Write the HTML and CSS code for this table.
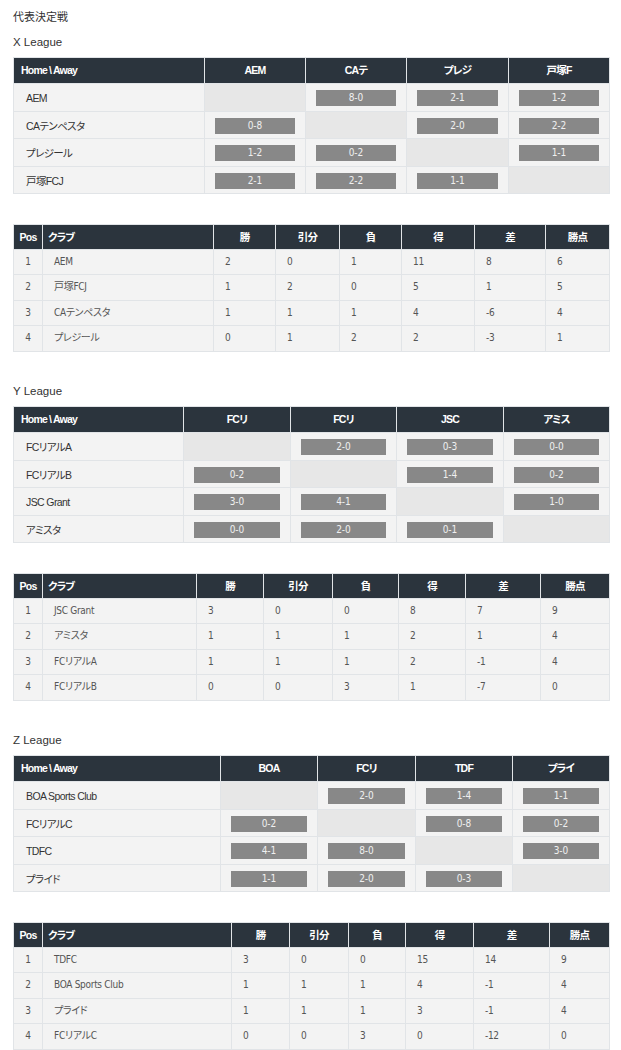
FILE: index.html
```html
<!DOCTYPE html>
<html lang="ja">
<head>
<meta charset="utf-8">
<title>代表決定戦</title>
<link rel="stylesheet" href="styles.css">
</head>
<body>
<div class="page">
  <p class="title">代表決定戦</p>

  <section class="league">
    <p class="league-name">X League</p>
    <table class="matrix">
      <colgroup><col class="w191"><col class="w101"><col class="w101"><col class="w102"><col class="w101"></colgroup>
      <thead><tr><th class="th-home">Home \ Away</th><th>AEM</th><th>CAテ</th><th>プレジ</th><th>戸塚F</th></tr></thead>
      <tbody>
        <tr><td class="team">AEM</td><td class="self"></td><td><span class="score">8-0</span></td><td><span class="score">2-1</span></td><td><span class="score">1-2</span></td></tr>
        <tr><td class="team">CAテンペスタ</td><td><span class="score">0-8</span></td><td class="self"></td><td><span class="score">2-0</span></td><td><span class="score">2-2</span></td></tr>
        <tr><td class="team">プレジール</td><td><span class="score">1-2</span></td><td><span class="score">0-2</span></td><td class="self"></td><td><span class="score">1-1</span></td></tr>
        <tr><td class="team">戸塚FCJ</td><td><span class="score">2-1</span></td><td><span class="score">2-2</span></td><td><span class="score">1-1</span></td><td class="self"></td></tr>
      </tbody>
    </table>

    <table class="standings">
      <colgroup><col class="w29"><col class="w171"><col class="w62"><col class="w64"><col class="w62"><col class="w73"><col class="w71"><col class="w64"></colgroup>
      <thead><tr><th>Pos</th><th class="th-club">クラブ</th><th>勝</th><th>引分</th><th>負</th><th>得</th><th>差</th><th>勝点</th></tr></thead>
      <tbody>
        <tr><td class="pos">1</td><td>AEM</td><td>2</td><td>0</td><td>1</td><td>11</td><td>8</td><td>6</td></tr>
        <tr><td class="pos">2</td><td>戸塚FCJ</td><td>1</td><td>2</td><td>0</td><td>5</td><td>1</td><td>5</td></tr>
        <tr><td class="pos">3</td><td>CAテンペスタ</td><td>1</td><td>1</td><td>1</td><td>4</td><td>-6</td><td>4</td></tr>
        <tr><td class="pos">4</td><td>プレジール</td><td>0</td><td>1</td><td>2</td><td>2</td><td>-3</td><td>1</td></tr>
      </tbody>
    </table>
  </section>

  <section class="league">
    <p class="league-name">Y League</p>
    <table class="matrix">
      <colgroup><col class="w170"><col class="w107"><col class="w106"><col class="w107"><col class="w106"></colgroup>
      <thead><tr><th class="th-home">Home \ Away</th><th>FCリ</th><th>FCリ</th><th>JSC</th><th>アミス</th></tr></thead>
      <tbody>
        <tr><td class="team">FCリアルA</td><td class="self"></td><td><span class="score">2-0</span></td><td><span class="score">0-3</span></td><td><span class="score">0-0</span></td></tr>
        <tr><td class="team">FCリアルB</td><td><span class="score">0-2</span></td><td class="self"></td><td><span class="score">1-4</span></td><td><span class="score">0-2</span></td></tr>
        <tr><td class="team">JSC Grant</td><td><span class="score">3-0</span></td><td><span class="score">4-1</span></td><td class="self"></td><td><span class="score">1-0</span></td></tr>
        <tr><td class="team">アミスタ</td><td><span class="score">0-0</span></td><td><span class="score">2-0</span></td><td><span class="score">0-1</span></td><td class="self"></td></tr>
      </tbody>
    </table>

    <table class="standings">
      <colgroup><col class="w29"><col class="w154"><col class="w67"><col class="w69"><col class="w66"><col class="w67"><col class="w75"><col class="w69"></colgroup>
      <thead><tr><th>Pos</th><th class="th-club">クラブ</th><th>勝</th><th>引分</th><th>負</th><th>得</th><th>差</th><th>勝点</th></tr></thead>
      <tbody>
        <tr><td class="pos">1</td><td>JSC Grant</td><td>3</td><td>0</td><td>0</td><td>8</td><td>7</td><td>9</td></tr>
        <tr><td class="pos">2</td><td>アミスタ</td><td>1</td><td>1</td><td>1</td><td>2</td><td>1</td><td>4</td></tr>
        <tr><td class="pos">3</td><td>FCリアルA</td><td>1</td><td>1</td><td>1</td><td>2</td><td>-1</td><td>4</td></tr>
        <tr><td class="pos">4</td><td>FCリアルB</td><td>0</td><td>0</td><td>3</td><td>1</td><td>-7</td><td>0</td></tr>
      </tbody>
    </table>
  </section>

  <section class="league">
    <p class="league-name">Z League</p>
    <table class="matrix">
      <colgroup><col class="w207"><col class="w97"><col class="w98"><col class="w97"><col class="w97"></colgroup>
      <thead><tr><th class="th-home">Home \ Away</th><th>BOA</th><th>FCリ</th><th>TDF</th><th>プライ</th></tr></thead>
      <tbody>
        <tr><td class="team">BOA Sports Club</td><td class="self"></td><td><span class="score">2-0</span></td><td><span class="score">1-4</span></td><td><span class="score">1-1</span></td></tr>
        <tr><td class="team">FCリアルC</td><td><span class="score">0-2</span></td><td class="self"></td><td><span class="score">0-8</span></td><td><span class="score">0-2</span></td></tr>
        <tr><td class="team">TDFC</td><td><span class="score">4-1</span></td><td><span class="score">8-0</span></td><td class="self"></td><td><span class="score">3-0</span></td></tr>
        <tr><td class="team">プライド</td><td><span class="score">1-1</span></td><td><span class="score">2-0</span></td><td><span class="score">0-3</span></td><td class="self"></td></tr>
      </tbody>
    </table>

    <table class="standings">
      <colgroup><col class="w29"><col class="w189"><col class="w58"><col class="w59"><col class="w57"><col class="w68"><col class="w76"><col class="w60"></colgroup>
      <thead><tr><th>Pos</th><th class="th-club">クラブ</th><th>勝</th><th>引分</th><th>負</th><th>得</th><th>差</th><th>勝点</th></tr></thead>
      <tbody>
        <tr><td class="pos">1</td><td>TDFC</td><td>3</td><td>0</td><td>0</td><td>15</td><td>14</td><td>9</td></tr>
        <tr><td class="pos">2</td><td>BOA Sports Club</td><td>1</td><td>1</td><td>1</td><td>4</td><td>-1</td><td>4</td></tr>
        <tr><td class="pos">3</td><td>プライド</td><td>1</td><td>1</td><td>1</td><td>3</td><td>-1</td><td>4</td></tr>
        <tr><td class="pos">4</td><td>FCリアルC</td><td>0</td><td>0</td><td>3</td><td>0</td><td>-12</td><td>0</td></tr>
      </tbody>
    </table>
  </section>
</div>
</body>
</html>
```

FILE: styles.css
```css
html, body {
  margin: 0;
  padding: 0;
  background: #ffffff;
}

body {
  font-family: "Liberation Sans", "Noto Sans CJK JP", sans-serif;
  color: #333333;
}

.page {
  padding: 8px 12px 0 13px;
}

.title,
.league-name {
  margin: 0;
  line-height: 18px;
  color: #333333;
}

.title {
  font-size: 11px;
  margin-bottom: 7px;
}

.league-name {
  font-size: 11.5px;
  margin-bottom: 6px;
}

table {
  width: 596px;
  border-collapse: collapse;
  table-layout: fixed;
  font-feature-settings: "palt";
}

.matrix {
  margin-bottom: 29.5px;
}

.standings {
  margin-bottom: 30.5px;
}

th,
td {
  border: 1px solid #e1e4e7;
}

th {
  background: #2b343d;
  color: #ffffff;
  font-weight: bold;
  text-align: center;
  font-family: "Liberation Sans", "Noto Sans CJK JP", sans-serif;
  font-size: 10.5px;
  letter-spacing: -0.8px;
}

td {
  background: #f3f3f3;
}

/* matrix */
.matrix th {
  line-height: 13px;
  padding: 6px 4px;
}

.matrix .th-home {
  text-align: left;
  padding-left: 7px;
}

.matrix td {
  padding: 6px 10px 4.5px;
  vertical-align: top;
}

.matrix td.team {
  font-family: "Liberation Sans", "Noto Sans CJK JP", sans-serif;
  font-size: 10.5px;
  letter-spacing: -0.6px;
  line-height: 16px;
  color: #333333;
  padding-left: 12px;
  vertical-align: middle;
}

.matrix td.self {
  background: #e7e7e7;
}

.score {
  display: block;
  height: 16px;
  line-height: 16px;
  background: #888888;
  color: #f0f0f0;
  text-align: center;
  font-family: "DejaVu Sans Condensed", "Liberation Sans", sans-serif;
  font-size: 10px;
}

/* standings */
.standings th {
  line-height: 12px;
  padding: 6px 4px;
}

.standings .th-club {
  text-align: left;
  padding-left: 5px;
}

.standings td {
  font-family: "DejaVu Sans Condensed", "Liberation Sans", "Noto Sans CJK JP", sans-serif;
  font-size: 10px;
  letter-spacing: -0.3px;
  line-height: 14px;
  color: #555555;
  padding: 5px 11px 5.5px;
  vertical-align: middle;
}

.standings td.pos {
  text-align: center;
  padding-left: 0;
  padding-right: 0;
}

/* column widths */
.w29 { width: 29px; }
.w57 { width: 57px; }
.w58 { width: 58px; }
.w59 { width: 59px; }
.w60 { width: 60px; }
.w62 { width: 62px; }
.w64 { width: 64px; }
.w66 { width: 66px; }
.w67 { width: 67px; }
.w68 { width: 68px; }
.w69 { width: 69px; }
.w71 { width: 71px; }
.w73 { width: 73px; }
.w75 { width: 75px; }
.w76 { width: 76px; }
.w97 { width: 97px; }
.w98 { width: 98px; }
.w101 { width: 101px; }
.w102 { width: 102px; }
.w106 { width: 106px; }
.w107 { width: 107px; }
.w154 { width: 154px; }
.w170 { width: 170px; }
.w171 { width: 171px; }
.w189 { width: 189px; }
.w191 { width: 191px; }
.w207 { width: 207px; }
```
